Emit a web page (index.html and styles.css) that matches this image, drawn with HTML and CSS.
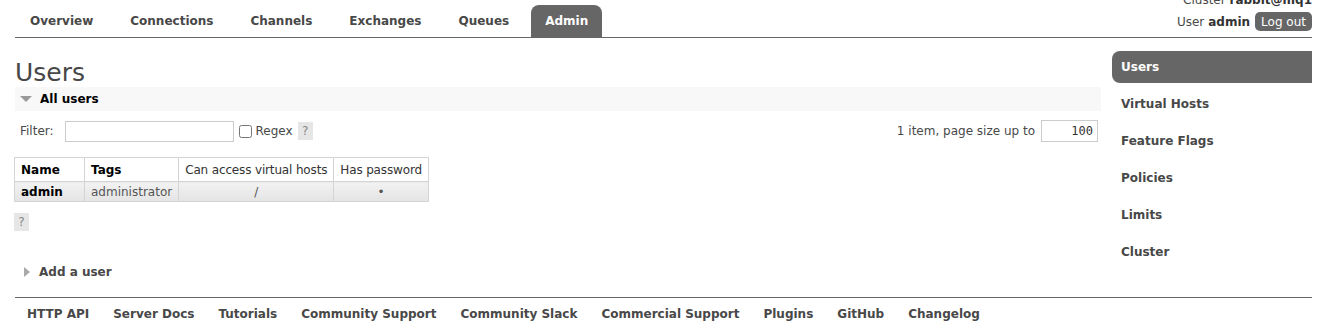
FILE: index.html
```html
<!DOCTYPE html>
<html>
<head>
<meta charset="utf-8">
<title>RabbitMQ Management</title>
<link rel="stylesheet" href="styles.css">
</head>
<body>
<div class="page">
  <header class="header">
    <ul class="tabs">
      <li><a>Overview</a></li>
      <li><a>Connections</a></li>
      <li><a>Channels</a></li>
      <li><a>Exchanges</a></li>
      <li><a>Queues</a></li>
      <li class="active"><a>Admin</a></li>
    </ul>
    <div class="login">
      <div class="cluster">Cluster <b>rabbit@mq1</b></div>
      <div class="user">User <b>admin</b> <button class="logout">Log out</button></div>
    </div>
  </header>

  <div class="body">
    <main class="main">
      <h1 class="title">Users</h1>
      <div class="section-head open"><span class="tri-down"></span>All users</div>
      <div class="filter-row">
        <div class="filter-left">
          <label class="flabel">Filter:</label>
          <input class="filter-input" type="text">
          <input class="regex-box" type="checkbox">
          <span class="regex">Regex</span>
          <span class="help">?</span>
        </div>
        <div class="filter-right">
          <span>1 item, page size up to</span>
          <input class="page-size" type="text" value="100">
        </div>
      </div>
      <table class="list">
        <thead>
          <tr>
            <th class="c-name b">Name</th>
            <th class="c-tags b">Tags</th>
            <th>Can access virtual hosts</th>
            <th>Has password</th>
          </tr>
        </thead>
        <tbody>
          <tr>
            <td class="b dark">admin</td>
            <td>administrator</td>
            <td class="center">/</td>
            <td class="center">&bull;</td>
          </tr>
        </tbody>
      </table>
      <span class="help help-block">?</span>
      <div class="section-head closed"><span class="tri-right"></span>Add a user</div>
    </main>
    <nav class="side">
      <a class="active">Users</a>
      <a>Virtual Hosts</a>
      <a>Feature Flags</a>
      <a>Policies</a>
      <a>Limits</a>
      <a>Cluster</a>
    </nav>
  </div>

  <footer class="footer">
    <a>HTTP API</a>
    <a>Server Docs</a>
    <a>Tutorials</a>
    <a>Community Support</a>
    <a>Community Slack</a>
    <a>Commercial Support</a>
    <a>Plugins</a>
    <a>GitHub</a>
    <a>Changelog</a>
  </footer>
</div>
</body>
</html>
```

FILE: styles.css
```css
html, body {
  margin: 0;
  padding: 0;
  background: #fff;
}
body {
  font-family: "DejaVu Sans", Verdana, sans-serif;
  font-size: 12px;
  color: #484848;
}
.page {
  padding: 0 17px 0 15px;
}
a { cursor: pointer; }

/* header */
.header {
  display: flex;
  justify-content: space-between;
  align-items: flex-end;
  border-bottom: 1px solid #666;
  margin-top: -8px;
}
.tabs {
  list-style: none;
  margin: 0;
  padding: 0;
  display: flex;
  gap: 7px;
}
.tabs li a {
  display: block;
  height: 32px;
  line-height: 32px;
  padding: 0 15px;
  font-weight: bold;
  color: #484848;
  border-radius: 8px 8px 0 0;
}
.tabs li.active a {
  background: #666;
  color: #fff;
  padding: 0 14px;
}
.login {
  display: flex;
  flex-direction: column;
  align-items: flex-end;
  padding-bottom: 6px;
}
.cluster {
  line-height: 16px;
  margin-bottom: 4px;
}
.cluster b, .user b { color: #333; }
.user {
  display: flex;
  align-items: center;
  gap: 4px;
  height: 19px;
}
.logout {
  font-family: "DejaVu Sans", Verdana, sans-serif;
  font-size: 12px;
  color: #fff;
  background: #666;
  border: 0;
  border-radius: 5px;
  height: 19px;
  padding: 0 6px;
  margin-left: 1px;
}

/* body */
.body {
  display: flex;
  gap: 11px;
}
.main {
  flex: 1;
  min-width: 0;
}
.title {
  margin: 21px 0 0 0;
  font-size: 25px;
  line-height: 28px;
  font-weight: normal;
  color: #484848;
}
.section-head {
  height: 24px;
  line-height: 24px;
  font-weight: bold;
  display: flex;
  align-items: center;
  padding-left: 5px;
}
.section-head.open {
  background: #f8f8f8;
  color: #000;
}
.section-head.closed {
  margin-top: 29px;
  color: #484848;
}
.tri-down {
  width: 0; height: 0;
  border-left: 6px solid transparent;
  border-right: 6px solid transparent;
  border-top: 6px solid #999;
  margin-right: 8px;
}
.tri-right {
  width: 0; height: 0;
  border-top: 5px solid transparent;
  border-bottom: 5px solid transparent;
  border-left: 6px solid #aaa;
  margin: 0 9px 0 4px;
}
.filter-row {
  display: flex;
  justify-content: space-between;
  align-items: center;
  margin-top: 8px;
  height: 24px;
}
.filter-left, .filter-right {
  display: flex;
  align-items: center;
}
.flabel { margin-left: 5px; margin-right: 11px; }
.filter-input {
  width: 169px;
  height: 21px;
  box-sizing: border-box;
  border: 1px solid #ccc;
  margin: 0;
  padding: 0 3px;
  font-family: "DejaVu Sans", Verdana, sans-serif;
}
.regex-box {
  margin: 0 4px 0 5px;
  width: 13px;
  height: 13px;
}
.help {
  display: inline-block;
  background: #e6e6e6;
  color: #888;
  width: 15px;
  height: 18px;
  line-height: 18px;
  text-align: center;
  margin-left: 5px;
}
.filter-right span { margin-right: 6px; }
.page-size {
  width: 57px;
  height: 22px;
  box-sizing: border-box;
  border: 1px solid #ccc;
  margin: 0 3px 0 0;
  padding: 0 4px;
  text-align: right;
  font-family: "DejaVu Sans Mono", monospace;
  font-size: 12px;
  color: #333;
}

.list {
  border-collapse: collapse;
  margin-top: 14px;
  margin-left: -1px;
}
.list th, .list td {
  border: 1px solid #d4d4d4;
  padding: 0 6px;
  text-align: left;
  white-space: nowrap;
}
.list th {
  height: 23px;
  font-weight: normal;
  color: #333;
  background: #fff;
  letter-spacing: -0.15px;
}
.list th.b, .list td.b { font-weight: bold; color: #000; letter-spacing: 0; }
.list td {
  height: 19px;
  background: linear-gradient(#f2f2f2, #e4e4e4);
  color: #555;
}
.c-name { width: 57px; }
.list td.center { text-align: center; }
.help-block {
  display: block;
  margin: 11px 0 0 -1px;
}

/* side menu */
.side {
  width: 200px;
  margin-top: 13px;
  display: flex;
  flex-direction: column;
  gap: 5px;
}
.side a {
  height: 32px;
  line-height: 32px;
  padding-left: 9px;
  font-weight: bold;
  color: #484848;
  border-radius: 8px 0 0 8px;
}
.side a.active {
  background: #666;
  color: #fff;
}

/* footer */
.footer {
  margin-top: 13px;
  border-top: 1px solid #666;
  padding-top: 8px;
  display: flex;
}
.footer a {
  padding: 0 12px;
  line-height: 16px;
  font-weight: bold;
  color: #484848;
}
```
